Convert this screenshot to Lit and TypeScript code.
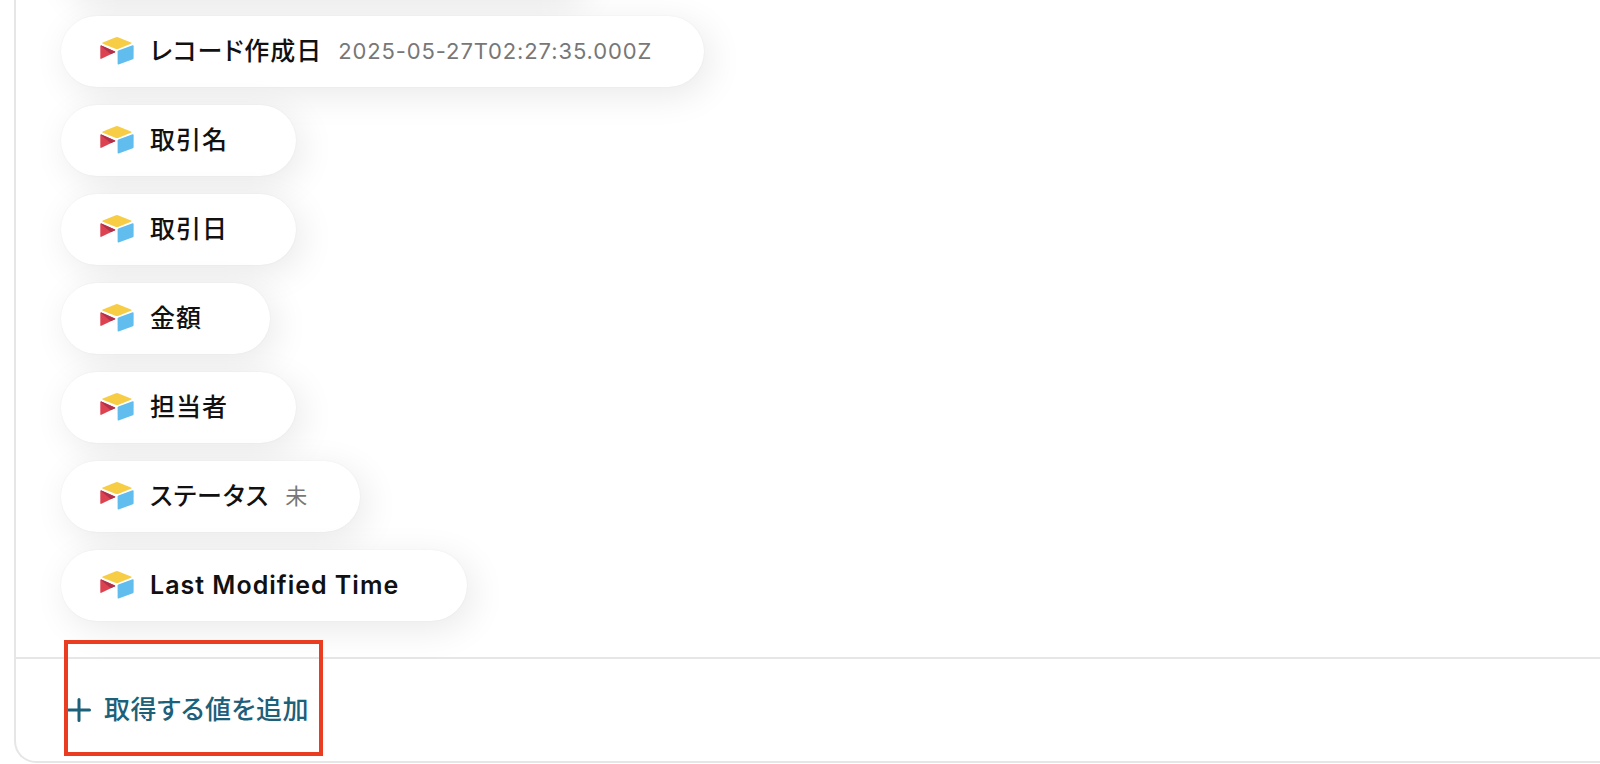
import { LitElement, html, css, nothing } from "lit";
import { customElement, property } from "lit/decorators.js";

interface Field {
  name: string;
  value?: string;
  lang?: string;
}

const FIELDS: Field[] = [
  { name: "レコード作成日", value: "2025-05-27T02:27:35.000Z" },
  { name: "取引名" },
  { name: "取引日" },
  { name: "金額" },
  { name: "担当者" },
  { name: "ステータス", value: "未" },
  { name: "Last Modified Time", lang: "en" },
];

@customElement("field-pill")
export class FieldPill extends LitElement {
  @property() name = "";
  @property() value = "";

  static styles = css`
    :host {
      display: flex;
      align-items: center;
      box-sizing: border-box;
      min-height: 71px;
      padding: 16px 52px 17px 39px;
      border-radius: 36px;
      background: #fff;
      box-shadow: 0 0 2px rgba(0, 0, 0, 0.06), 6px 8px 36px rgba(0, 0, 0, 0.09);
    }
    .logo {
      flex: none;
      width: 34px;
      height: 28px;
      margin-right: 16px;
    }
    .name {
      margin-right: 16px;
      color: #111;
      font-size: 25px;
      font-weight: 500;
      line-height: 36px;
      letter-spacing: 0.04em;
      white-space: nowrap;
    }
    .name:lang(en) {
      font-weight: 600;
    }
    .value {
      color: #777;
      font-size: 22px;
      line-height: 36px;
      letter-spacing: 0.04em;
      white-space: nowrap;
    }
  `;

  render() {
    if (!this.name) return nothing;
    return html`
      <svg class="logo" viewBox="0 0 34 28" aria-hidden="true">
        <path fill="#f8cd46" d="M15.2.4a4.500 4.500 0 0 1 3.400 0L31 5.400c.7.300.7 1.100 0 1.400L18.700 11.700a4.500 4.500 0 0 1-3.400 0L2.800 6.800c-.7-.3-.7-1.100 0-1.400z" />
        <path fill="#61bdee" d="M17.600 14.500c0-.5.300-.8.700-1L32.600 8.200c.6-.2 1 .1 1 .7v12.300c0 .5-.3.800-.7 1L18.600 27.500c-.6.200-1-.1-1-.7z" />
        <path fill="#dc4250" d="M.3 9.200c0-.7.500-1 1.100-.7L15 14.500c.4.200.4.600 0 .8L1.400 21.800c-.6.300-1.100 0-1.100-.6z" />
        <path fill="#b2314a" d="M.6 8.700c.2-.3.500-.3.800-.2L15 14.500c.4.200.4.600 0 .8l-4.200 2z" />
      </svg>
      <span class="name">${this.name}</span>
      <span class="value">${this.value}</span>
    `;
  }
}

@customElement("app-root")
export class AppRoot extends LitElement {
  static styles = css`
    :host {
      display: block;
      overflow: hidden;
      padding-left: 14px;
      background: #fff;
      font-family: Inter, "Noto Sans CJK JP", sans-serif;
      font-feature-settings: "palt";
    }
    .panel {
      border: 2px solid #e6e6e6;
      border-width: 0 0 2px 2px;
      border-radius: 0 0 0 22px;
    }
    .list {
      display: flex;
      flex-direction: column;
      align-items: flex-start;
      gap: 18px;
      margin: 0;
      padding: 0 45px 36px;
      list-style: none;
    }
    /* The tail of the row that is scrolled out of view. */
    .scrolled {
      width: 524px;
      margin-top: -73px;
    }
    .footer {
      display: flex;
      padding: 34px 48px;
      border-top: 2px solid #e6e6e6;
    }
    .target {
      position: relative;
    }
    .marker {
      position: absolute;
      inset: -53px -14px -29px 0;
      border: 4px solid #ea3c20;
      pointer-events: none;
    }
    .add {
      display: flex;
      align-items: center;
      gap: 13px;
      padding: 0 0 0 3px;
      border: 0;
      background: none;
      color: #1c607a;
      font: inherit;
      font-size: 26px;
      font-weight: 500;
      line-height: 34px;
      letter-spacing: 0.02em;
      font-feature-settings: inherit;
      white-space: nowrap;
      cursor: pointer;
    }
    .plus {
      width: 24px;
      height: 24px;
    }
  `;

  render() {
    return html`
      <section class="panel">
        <ul class="list">
          <li class="scrolled"><field-pill></field-pill></li>
          ${FIELDS.map(
            (f) => html`<li lang=${f.lang ?? "ja"}><field-pill .name=${f.name} .value=${f.value ?? ""}></field-pill></li>`
          )}
        </ul>
        <footer class="footer">
          <div class="target">
            <button class="add" type="button" lang="ja">
              <svg class="plus" viewBox="0 0 24 24" aria-hidden="true">
                <path d="M12 1.500v21M1.500 12h21" stroke="currentColor" stroke-width="3" stroke-linecap="round" />
              </svg>
              取得する値を追加
            </button>
            <span class="marker"></span>
          </div>
        </footer>
      </section>
    `;
  }
}
